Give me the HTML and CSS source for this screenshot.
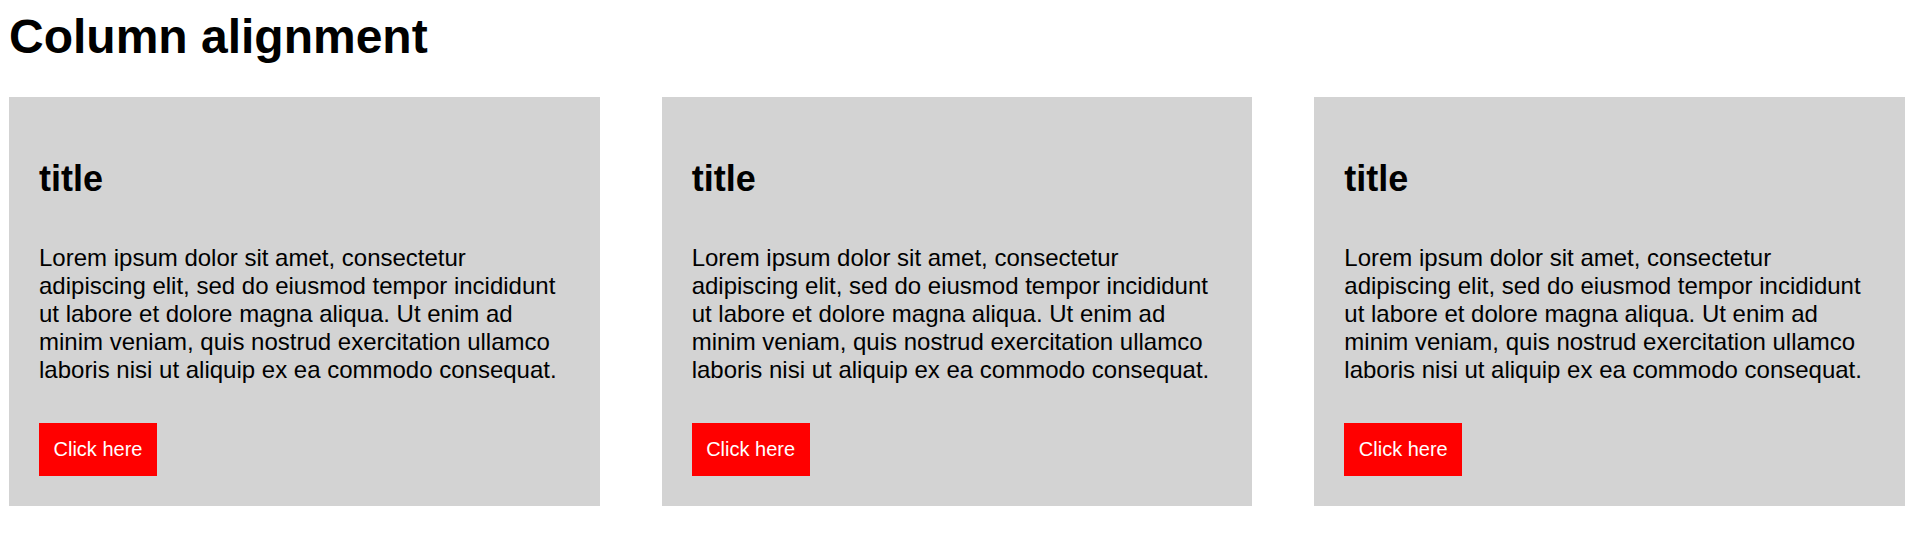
FILE: index.html
```html
<!DOCTYPE html>
<html lang="en">
<head>
<meta charset="utf-8">
<title>Column alignment</title>
<link rel="stylesheet" href="styles.css">
</head>
<body>
<h1 class="page-title">Column alignment</h1>
<div class="columns">
  <div class="card">
    <h2 class="card-title">title</h2>
    <p class="card-text">Lorem ipsum dolor sit amet, consectetur adipiscing elit, sed do eiusmod tempor incididunt ut labore et dolore magna aliqua. Ut enim ad minim veniam, quis nostrud exercitation ullamco laboris nisi ut aliquip ex ea commodo consequat.</p>
    <div class="card-actions"><button class="card-btn">Click here</button></div>
  </div>
  <div class="card">
    <h2 class="card-title">title</h2>
    <p class="card-text">Lorem ipsum dolor sit amet, consectetur adipiscing elit, sed do eiusmod tempor incididunt ut labore et dolore magna aliqua. Ut enim ad minim veniam, quis nostrud exercitation ullamco laboris nisi ut aliquip ex ea commodo consequat.</p>
    <div class="card-actions"><button class="card-btn">Click here</button></div>
  </div>
  <div class="card">
    <h2 class="card-title">title</h2>
    <p class="card-text">Lorem ipsum dolor sit amet, consectetur adipiscing elit, sed do eiusmod tempor incididunt ut labore et dolore magna aliqua. Ut enim ad minim veniam, quis nostrud exercitation ullamco laboris nisi ut aliquip ex ea commodo consequat.</p>
    <div class="card-actions"><button class="card-btn">Click here</button></div>
  </div>
</div>
</body>
</html>
```
FILE: styles.css
```css
html, body {
  background: #ffffff;
}
body {
  margin: 0;
  padding: 9px 6px 0 9px;
  font-family: "Liberation Sans", Arial, sans-serif;
  color: #000000;
}
.page-title {
  margin: 0 0 33px 0;
  font-size: 48px;
  font-weight: bold;
  line-height: 55px;
}
.columns {
  display: grid;
  grid-template-columns: 1fr 1fr 1fr;
  gap: 62px;
}
.card {
  background: #d3d3d3;
  padding: 30px 30px 30px 30px;
  display: flex;
  flex-direction: column;
}
.card-title {
  margin: 31px 0 0 0;
  font-size: 36px;
  font-weight: bold;
  line-height: 41px;
}
.card-text {
  margin: 45px 0 0 0;
  font-size: 24px;
  line-height: 28px;
}
.card-actions {
  margin-top: 39px;
}
.card-btn {
  background: #ff0000;
  color: #ffffff;
  border: none;
  border-radius: 0;
  font-family: "Liberation Sans", Arial, sans-serif;
  font-size: 20px;
  line-height: 23px;
  padding: 15px 14.5px;
  margin: 0;
  cursor: pointer;
}
```
